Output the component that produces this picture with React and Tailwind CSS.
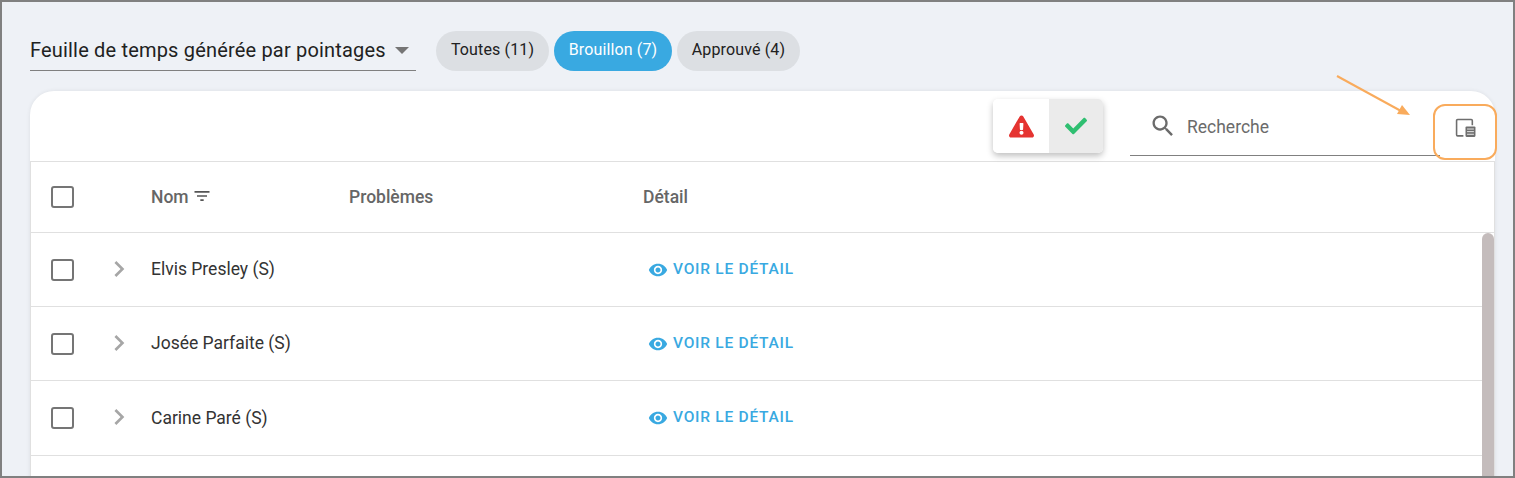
import React from 'react';
import { FaCheck, FaExclamationTriangle } from 'react-icons/fa';

const employees = ['Elvis Presley (S)', 'Josée Parfaite (S)', 'Carine Paré (S)'];
const rowHeights = ['h-[74px]', 'h-[74px]', 'h-[75px]'];

const Checkbox = () => (
  <div className="w-[23px] h-[22px] rounded-[3px] border-2 border-[#757575] bg-white" />
);

const EyeIcon = () => (
  <svg viewBox="0 0 24 24" className="w-[20px] h-[20px] fill-[#39a9e1]">
    <path d="M12 4.5C7 4.5 2.73 7.61 1 12c1.73 4.39 6 7.5 11 7.5s9.27-3.11 11-7.5c-1.73-4.39-6-7.5-11-7.5zM12 17c-2.76 0-5-2.24-5-5s2.24-5 5-5 5 2.24 5 5-2.24 5-5 5zm0-8c-1.66 0-3 1.34-3 3s1.34 3 3 3 3-1.34 3-3-1.34-3-3-3z" />
  </svg>
);

const App = () => {
  return (
    <div className="relative w-[1515px] h-[478px] overflow-hidden border-2 border-[#808080] bg-[#eef1f6] font-['Roboto',sans-serif]">
      {/* Top bar */}
      <div className="flex items-start pl-[28px] pt-[29px] h-[89px]">
        <div className="flex items-center w-[386px] h-[40px] pb-[2px] border-b border-[#808080] text-[20px] tracking-[0.18px] text-[#212121]">
          <span>Feuille de temps générée par pointages</span>
          <svg viewBox="0 0 14 7" className="w-[14px] h-[7px] ml-[9px] mt-[2px] fill-[#757575]">
            <path d="M0 0h14L7 7z" />
          </svg>
        </div>
        <div className="flex gap-[5px] ml-[20px] text-[16px] tracking-[0.14px] text-[#212121]">
          <div className="flex items-center justify-center w-[113px] h-[40px] pb-[2px] rounded-full bg-[#dcdfe3]">Toutes (11)</div>
          <div className="flex items-center justify-center w-[118px] h-[40px] pb-[2px] rounded-full bg-[#39a9e1] text-white">Brouillon (7)</div>
          <div className="flex items-center justify-center w-[123px] h-[40px] pb-[2px] rounded-full bg-[#dcdfe3]">Approuvé (4)</div>
        </div>
      </div>

      {/* Card */}
      <div className="ml-[28px] w-[1465px] h-[400px] rounded-t-[24px] bg-white shadow-[0_0_4px_rgba(0,0,0,0.08)]">
        {/* Toolbar */}
        <div className="flex items-start h-[71px] border-b border-[#e0e0e0]">
          <div className="flex ml-[963px] mt-[8px] w-[110px] h-[54px] rounded-[5px] overflow-hidden shadow-[0_3px_6px_rgba(0,0,0,0.25)]">
            <div className="flex items-center justify-center w-[56px] bg-white">
              <FaExclamationTriangle className="w-[25px] h-[25px] text-[#e53431]" />
            </div>
            <div className="flex items-center justify-center w-[54px] bg-[#ebebeb]">
              <FaCheck className="w-[22px] h-[22px] text-[#2fbf71]" />
            </div>
          </div>
          <div className="flex items-center ml-[27px] mt-[8px] w-[310px] h-[57px] border-b border-[#808080]">
            <svg viewBox="0 0 24 24" className="w-[28px] h-[28px] ml-[19px] mb-[2px] fill-[#6b6b6b]">
              <path d="M15.5 14h-.79l-.28-.27C15.41 12.59 16 11.11 16 9.5 16 5.91 13.09 3 9.5 3S3 5.91 3 9.5 5.91 16 9.5 16c1.61 0 3.09-.59 4.23-1.57l.27.28v.79l5 4.99L20.49 19l-4.99-5zm-6 0C7.01 14 5 11.99 5 9.5S7.01 5 9.5 5 14 7.01 14 9.5 11.99 14 9.5 14z" />
            </svg>
            <span className="ml-[10px] text-[17.5px] text-[#6b6b6b]">Recherche</span>
          </div>
        </div>

        {/* Table */}
        <div className="border-x border-[#e0e0e0]">
          <div className="grid grid-cols-[120px_198px_294px_1fr] items-center h-[71px] border-b border-[#e0e0e0] text-[17.5px] font-medium text-[#666666]">
            <div className="pl-[20px]"><Checkbox /></div>
            <div className="flex items-center gap-[3px]">
              <span>Nom</span>
              <svg viewBox="0 0 24 24" className="w-[20px] h-[20px] mb-[2px] fill-[#555555]">
                <path d="M10 18h4v-2h-4v2zM3 6v2h18V6H3zm3 7h12v-2H6v2z" />
              </svg>
            </div>
            <div>Problèmes</div>
            <div>Détail</div>
          </div>

          <div className="flex">
            <div className="flex-1">
              {employees.map((name, i) => (
                <div
                  key={name}
                  className={`grid grid-cols-[120px_198px_294px_1fr] items-center border-b border-[#e0e0e0] ${rowHeights[i]}`}
                >
                  <div className="flex items-center pl-[20px]">
                    <Checkbox />
                    <svg viewBox="0 0 24 24" className="w-[32px] h-[32px] ml-[29px] mb-[2px] fill-[#a6a6a6]">
                      <path d="M10 6L8.59 7.41 13.17 12l-4.58 4.59L10 18l6-6z" />
                    </svg>
                  </div>
                  <div className="text-[17.5px] text-[#333333]">{name}</div>
                  <div />
                  <div className="flex items-center gap-[5px] pl-[5px] text-[15.5px] font-medium tracking-[0.75px] text-[#39a9e1]">
                    <EyeIcon />
                    <span>VOIR LE DÉTAIL</span>
                  </div>
                </div>
              ))}
            </div>
            <div className="w-[12px] h-[300px] rounded-t-[6px] bg-[#c4bcbc]" />
          </div>
        </div>
      </div>

      {/* Annotation */}
      <div className="absolute left-[1431px] top-[102px] flex items-center justify-center w-[64px] h-[56px] rounded-[12px] border-2 border-[#f9ab5c]">
        <svg viewBox="0 0 20 20" className="w-[21px] h-[21px] mb-[8px]" fill="none">
          <path d="M8 17H2.5a1 1 0 0 1-1-1V2.5a1 1 0 0 1 1-1h13a1 1 0 0 1 1 1V7" stroke="#6e6e6e" strokeWidth="1.5" />
          <rect x="10" y="8" width="9.5" height="10" rx="1" fill="#6e6e6e" />
          <path d="M11.5 10.5h6.5M11.5 13h6.5M11.5 15.5h6.5" stroke="#ffffff" strokeWidth="0.8" />
        </svg>
      </div>
      <svg viewBox="0 0 80 46" className="absolute left-[1333px] top-[72px] w-[80px] h-[46px]" fill="none">
        <path d="M2 2L66 37" stroke="#f9ab5c" strokeWidth="2" />
        <path d="M75 41L62 40L67 31z" fill="#f9ab5c" />
      </svg>
    </div>
  );
};

export default App;
